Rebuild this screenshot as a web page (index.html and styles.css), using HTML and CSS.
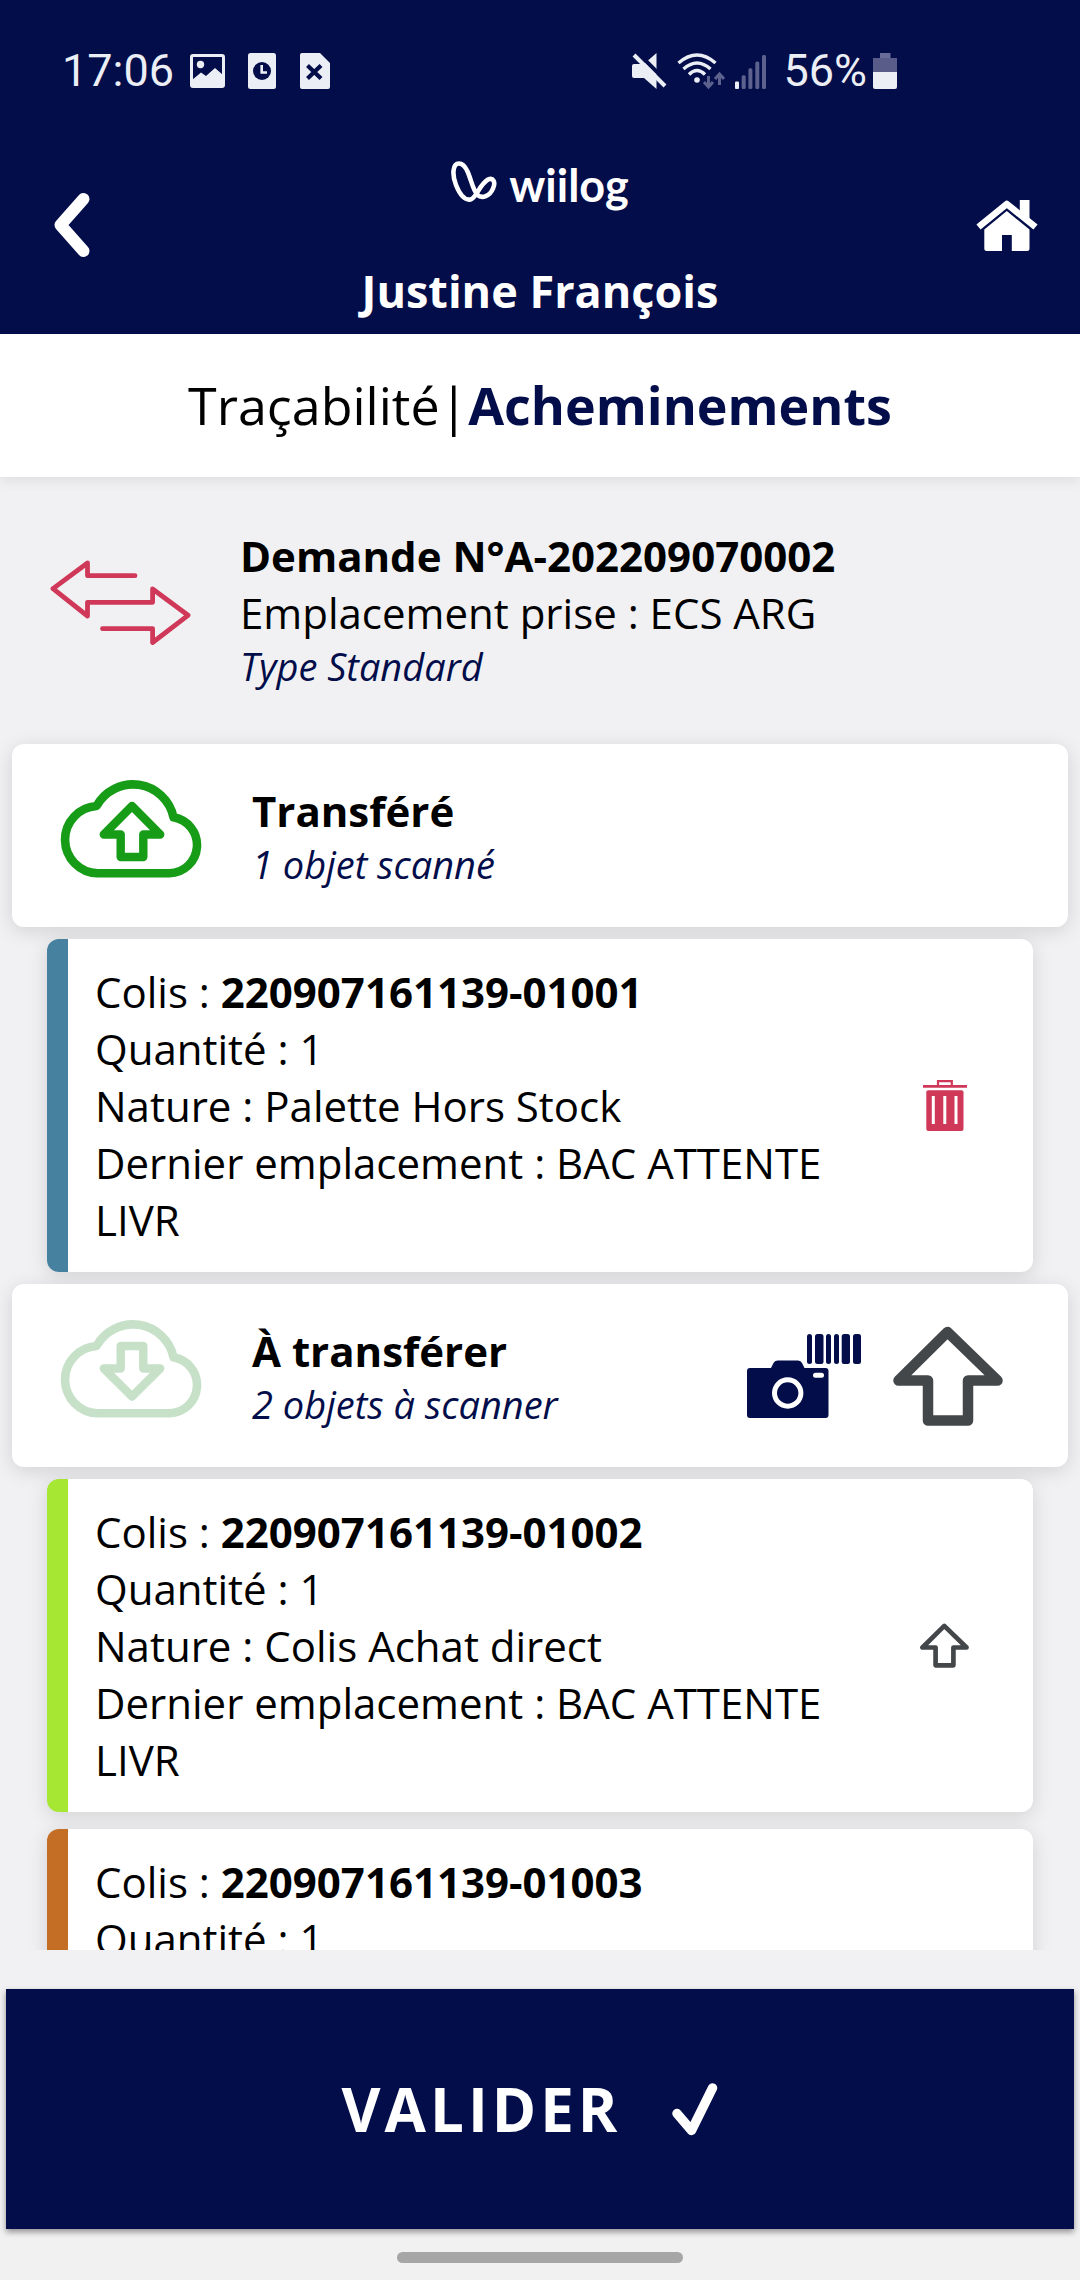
FILE: index.html
```html
<!DOCTYPE html>
<html lang="fr">
<head>
<meta charset="utf-8">
<meta name="viewport" content="width=device-width, initial-scale=1">
<title>Acheminements</title>
<link rel="stylesheet" href="styles.css">
</head>
<body>
<svg class="defs" aria-hidden="true">
  <symbol id="arrow-up" viewBox="0 0 110 100">
    <path d="M54.5 6 L5.500 54.500 H35 V94.500 H75 V54.500 H104.500 Z" fill="none" stroke="currentColor" stroke-width="10.500" stroke-linejoin="round"/>
  </symbol>
  <symbol id="cloud" viewBox="0 0 144 99">
    <path d="M37.500 94.300 H109.500 A28.200 28.200 0 0 0 113.500 38.300 A41.500 41.500 0 0 0 36.500 27 A33.700 33.700 0 0 0 37.500 94.300 Z" fill="none" stroke="currentColor" stroke-width="8.600" stroke-linejoin="round"/>
  </symbol>
</svg>

<header class="top">
  <div class="status">
    <div class="status-group status-left">
      <span>17:06</span>
      <svg width="35" height="35" viewBox="0 0 35 35" fill="none"><rect x="1.500" y="2.500" width="32" height="31" rx="1.500" stroke="#eceef5" stroke-width="3"/><circle cx="10.500" cy="11.500" r="3.700" fill="#eceef5"/><path d="M2 27 L11 19.500 L16 23 L25 15 L33 22 V33 H2 Z" fill="#eceef5"/></svg>
      <svg class="gap-a" width="28" height="36" viewBox="0 0 28 36"><rect width="28" height="36" rx="2.500" fill="#eceef5"/><circle cx="14" cy="18" r="9" fill="#020d4a"/><path d="M13.700 12 V19.500 H19" fill="none" stroke="#eceef5" stroke-width="2.600"/></svg>
      <svg class="gap-b" width="30" height="36" viewBox="0 0 30 36"><path d="M2 0 H20 L30 10 V34 Q30 36 28 36 H2 Q0 36 0 34 V2 Q0 0 2 0 Z" fill="#eceef5"/><path d="M7.500 12.500 L21 25.500 M21 12.500 L7.500 25.500" stroke="#020d4a" stroke-width="4.200"/></svg>
    </div>
    <div class="status-group status-right">
      <svg width="35" height="36" viewBox="0 0 35 36"><path d="M2 11 H12 L24.500 0 V36 L12 25 H2 Q0 25 0 23 V13 Q0 11 2 11 Z" fill="#eceef5"/><path d="M5 -1 L36 30" stroke="#020d4a" stroke-width="4"/><path d="M2 2 L33 33" stroke="#eceef5" stroke-width="4"/></svg>
      <svg width="48" height="36" viewBox="0 0 48 36" fill="none"><g stroke="#eceef5" stroke-width="3.400"><path d="M1.500 10 Q20 -6 38.500 10"/><path d="M6.500 16 Q20 4 33.500 16"/><path d="M12 21.500 Q20 13.500 28 21.500"/></g><circle cx="20" cy="27" r="2.800" fill="#eceef5"/><g stroke="#5d618e" stroke-width="3"><path d="M31.500 23 V34 M27 29 L31.500 34 L36 29"/><path d="M42.500 32 V21 M38 26 L42.500 21 L47 26"/></g></svg>
      <svg width="31" height="36" viewBox="0 0 31 36" fill="#5d618e"><rect y="28.500" width="4" height="7.500" rx="1" fill="#eceef5"/><rect x="6.700" y="22.300" width="4" height="13.700" rx="1.500"/><rect x="13.400" y="15.300" width="4" height="20.700" rx="1.500"/><rect x="20.300" y="8.500" width="4" height="27.500" rx="1.500"/><rect x="27" y="2" width="4" height="34" rx="1.500"/></svg>
      <span class="battery"><span>56%</span>
      <svg width="24" height="36" viewBox="0 0 24 36"><path d="M7 0 H17.500 V5 H7 Z" fill="#686c98"/><path d="M0 5 H24 V20 H0 Z" fill="#595c88"/><path d="M0 19 H24 V34 Q24 36 22 36 H2 Q0 36 0 34 Z" fill="#eceef5"/></svg></span>
    </div>
  </div>
  <div class="bar">
    <button class="icon-btn back" aria-label="Retour"><svg width="36" height="64" viewBox="0 0 36 64"><path d="M29.500 6 L6.500 32 L29.500 58" fill="none" stroke="#fff" stroke-width="12" stroke-linecap="round" stroke-linejoin="round"/></svg></button>
    <div class="brand">
      <div class="logo">
        <svg width="46" height="42" viewBox="0 0 46 42"><path d="M8 2.500 C1.500 2.500 1 14 5 24 C9 34 14 39.500 19.500 38.500 C25.500 37 28 24 37 18.500 C42 16 45 21 42 27.500 C39 35 31 38 26.500 34 C22 29.500 20 18 16.500 10.500 C14 5 11.500 2.500 8 2.500 Z" fill="none" stroke="#fff" stroke-width="4.600"/></svg>
        <span>wiilog</span>
      </div>
      <div class="user">Justine François</div>
    </div>
    <button class="icon-btn home" aria-label="Accueil"><svg width="64" height="51" viewBox="0 0 64 51"><path d="M44.800 0 H54.500 V23 L44.800 15 Z" fill="#fff"/><path d="M3.500 27 L31.800 4 L60.500 27" fill="none" stroke="#fff" stroke-width="6.600" stroke-linejoin="round"/><path d="M9.300 29.500 L31.800 11 L54.500 29.500 V48.500 Q54.500 51 52 51 H36.800 V35 H27 V51 H11.800 Q9.300 51 9.300 48.500 Z" fill="#fff"/></svg></button>
  </div>
</header>

<nav class="crumbs"><a href="#">Traçabilité</a><span>|</span><strong>Acheminements</strong></nav>

<main class="list">
  <section class="request">
    <div class="lead"><svg width="141" height="86" viewBox="0 0 141 86"><path d="M85 15.700 H37.500 V3 L3 28.700 L37.500 56 V42.300 H102.600 V29 L138 55.300 L102.600 82.500 V68.700 H52.500" fill="none" stroke="#cf3858" stroke-width="4.800" stroke-linecap="round" stroke-linejoin="round"/></svg></div>
    <div class="info">
      <h1>Demande N°A-202209070002</h1>
      <p>Emplacement prise : ECS ARG</p>
      <p class="note">Type Standard</p>
    </div>
  </section>

  <section class="group">
    <div class="lead done"><svg width="144" height="99" viewBox="0 0 144 99"><use href="#cloud" width="144" height="99"/><path d="M72 27 L43.800 55.500 H60.700 V78 H83.300 V55.500 H100.200 Z" fill="none" stroke="currentColor" stroke-width="8.400" stroke-linejoin="round"/></svg></div>
    <div class="info">
      <h2>Transféré</h2>
      <p class="note">1 objet scanné</p>
    </div>
  </section>

  <article class="item blue">
    <div class="info">
      <p>Colis : <b>220907161139-01001</b></p>
      <p>Quantité : 1</p>
      <p>Nature : Palette Hors Stock</p>
      <p>Dernier emplacement : BAC ATTENTE LIVR</p>
    </div>
    <button class="item-action" aria-label="Supprimer"><svg width="44" height="51" viewBox="0 0 44 51"><path d="M15 6 V1.200 H28.800 V6" fill="none" stroke="#cf3858" stroke-width="2.200"/><path d="M0 5 H44 V7.800 H0 Z" fill="#cf3858"/><rect x="3.300" y="10.300" width="37.200" height="40.700" rx="2" fill="#cf3858"/><path d="M10.300 16 V44 M21.800 16 V44 M33 16 V44" stroke="#fff" stroke-width="3"/></svg></button>
  </article>

  <section class="group">
    <div class="lead todo"><svg width="144" height="99" viewBox="0 0 144 99"><use href="#cloud" width="144" height="99"/><path d="M72 77.500 L43.800 49.500 H60.700 V27 H83.300 V49.500 H100.200 Z" fill="none" stroke="currentColor" stroke-width="8.400" stroke-linejoin="round"/></svg></div>
    <div class="info">
      <h2>À transférer</h2>
      <p class="note">2 objets à scanner</p>
    </div>
    <div class="tools">
      <button class="icon-btn" aria-label="Scanner"><svg width="114" height="84" viewBox="0 0 114 84" fill="#020d4a"><path d="M3 34 H24 L26.500 29 Q27.500 26.500 30.500 26.500 H51 Q54 26.500 55 29 L57.500 34 H78.500 Q81.500 34 81.500 37 V81 Q81.500 84 78.500 84 H3 Q0 84 0 81 V37 Q0 34 3 34 Z"/><circle cx="40.700" cy="59" r="13.200" stroke="#fff" stroke-width="5"/><rect x="66" y="38.700" width="11" height="5" rx="2.500" fill="#fff"/><rect x="60" width="5" height="30" rx="2.500"/><rect x="68" width="8.500" height="30" rx="2.500"/><rect x="79" width="5" height="30" rx="2.500"/><rect x="87" width="5" height="30" rx="2.500"/><rect x="94.700" width="8.300" height="30" rx="2.500"/><rect x="106" width="8" height="30" rx="2.500"/></svg></button>
      <button class="icon-btn arrow" aria-label="Tout transférer"><svg width="110" height="100"><use href="#arrow-up"/></svg></button>
    </div>
  </section>

  <article class="item green">
    <div class="info">
      <p>Colis : <b>220907161139-01002</b></p>
      <p>Quantité : 1</p>
      <p>Nature : Colis Achat direct</p>
      <p>Dernier emplacement : BAC ATTENTE LIVR</p>
    </div>
    <button class="item-action arrow" aria-label="Transférer"><svg width="49" height="45"><use href="#arrow-up"/></svg></button>
  </article>

  <article class="item orange">
    <div class="info">
      <p>Colis : <b>220907161139-01003</b></p>
      <p>Quantité : 1</p>
    </div>
    <button class="item-action arrow" aria-label="Transférer"><svg width="49" height="45"><use href="#arrow-up"/></svg></button>
  </article>
</main>

<footer class="bottom">
  <button class="validate"><span>VALIDER</span><svg width="46" height="53" viewBox="0 0 46 53"><path d="M5 30.500 L19.500 47.500 L40.500 5" fill="none" stroke="#fff" stroke-width="9.500" stroke-linecap="round" stroke-linejoin="round"/></svg></button>
  <div class="home-bar"></div>
</footer>
</body>
</html>
```
FILE: styles.css
```css
* { box-sizing: border-box; }

body {
  margin: 0;
  height: 100vh;
  display: flex;
  flex-direction: column;
  background: #f1f1f3;
  color: #000;
  font-family: "Open Sans", "Noto Sans", sans-serif;
  font-size: 42px;
  line-height: 57px;
}

h1, h2, p { margin: 0; font-size: inherit; }
svg { display: block; flex: none; }
a { color: inherit; text-decoration: none; }
button { margin: 0; padding: 0; border: 0; background: none; font: inherit; color: inherit; }
.defs { position: absolute; width: 0; height: 0; }

/* Header */
.top { background: #020d4a; color: #fff; padding-bottom: 13px; }

.status {
  display: flex;
  justify-content: space-between;
  padding: 42px 183px 0 62px;
  color: #eceef5;
  font-family: Roboto, sans-serif;
  font-size: 45px;
}
.status-group { display: flex; align-items: center; }
.status-left { gap: 16px; }
.status-left .gap-a { margin-left: 7px; }
.status-left .gap-b { margin-left: 8px; }
.status-right { gap: 10px; }
.battery { display: flex; align-items: center; gap: 6px; margin-left: 7px; }

.bar {
  display: grid;
  grid-template-columns: 1fr auto 1fr;
  align-items: center;
  padding: 62px 41px 0;
}
.back { justify-self: start; margin: 0 0 32px 13px; }
.home { justify-self: end; margin-bottom: 32px; }
.brand { display: flex; flex-direction: column; align-items: center; gap: 40px; }
.logo {
  display: flex;
  align-items: flex-start;
  gap: 12px;
  height: 60px;
  font: 700 45px/49px Lato, sans-serif;
}
.user { font-size: 45px; font-weight: 700; line-height: 60px; }

.crumbs {
  position: relative;
  display: flex;
  justify-content: center;
  padding: 35px 0 37px;
  background: #fff;
  box-shadow: 0 4px 12px rgba(0, 0, 0, .08);
  font-size: 52px;
  line-height: 71px;
}
.crumbs strong { color: #020d4a; }

/* Request, groups and items */
.list {
  flex: 1;
  min-height: 0;
  margin-bottom: 39px;
  overflow-y: auto;
  scrollbar-width: none;
}
.lead { flex: none; width: 144px; margin-bottom: 14px; }
.lead svg { margin: 0 auto; }
.note { color: #020d4a; font-size: 38px; font-style: italic; line-height: 51px; }
.info { flex: 1; min-width: 0; }

.request {
  display: flex;
  align-items: center;
  gap: 48px;
  padding: 50px 48px 52px;
}

.group {
  display: flex;
  align-items: center;
  gap: 48px;
  margin: 0 12px 12px;
  padding: 35px 65px 35px 48px;
  border-radius: 12px;
  background: #fff;
  box-shadow: 0 4px 20px rgba(0, 0, 0, .13);
}
.done { color: #179c17; }
.todo { color: #c7e1c9; }
.arrow { color: #43474a; }
.tools { display: flex; align-items: center; gap: 32px; }

.item {
  display: flex;
  align-items: center;
  min-height: 333px;
  margin: 0 47px 12px;
  padding: 24px 24px 24px 27px;
  border-left: 21px solid;
  border-radius: 12px;
  background: #fff;
  box-shadow: 0 4px 20px rgba(0, 0, 0, .13);
}
.item + .item { margin-top: 17px; }
.item .info { align-self: flex-start; }
.blue { border-color: #4682a0; }
.green { border-color: #a6e733; }
.orange { border-color: #c46e25; }
.item-action { display: flex; justify-content: center; width: 129px; }

/* Footer */
.bottom { padding: 0 6px 17px; background: #f1f1f1; }
.validate {
  display: flex;
  align-items: center;
  justify-content: center;
  gap: 51px;
  width: 100%;
  height: 240px;
  padding-right: 20px;
  background: #020d4a;
  box-shadow: 0 3px 6px rgba(0, 0, 0, .4);
  color: #fff;
  font-size: 60px;
  font-weight: 700;
  letter-spacing: 4px;
}
.home-bar {
  width: 286px;
  height: 11px;
  margin: 23px auto 0;
  border-radius: 6px;
  background: #a6a6a6;
}
```
